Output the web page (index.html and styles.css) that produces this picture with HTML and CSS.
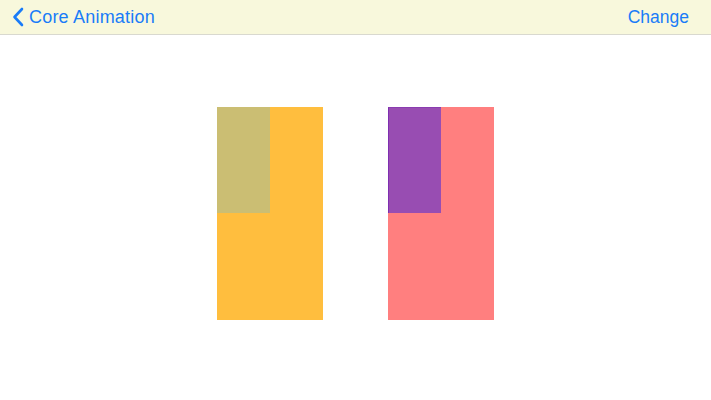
FILE: index.html
```html
<!DOCTYPE html>
<html>
<head>
<meta charset="utf-8">
<link rel="stylesheet" href="styles.css">
</head>
<body>
<header class="nav">
  <a class="back">
    <svg class="chev" width="12" height="20" viewBox="0 0 12 20"><path d="M10 2 L2.5 10 L10 18" fill="none" stroke="#1a7cf8" stroke-width="2.6" stroke-linecap="round" stroke-linejoin="round"/></svg>
    <span class="back-label">Core Animation</span>
  </a>
  <a class="action">Change</a>
</header>
<main class="stage">
  <div class="box orange"><div class="inner olive"></div></div>
  <div class="box pink"><div class="inner purple"></div></div>
</main>
</body>
</html>
```
FILE: styles.css
```css
html, body { margin: 0; padding: 0; background: #fff; }
body { font-family: "Helvetica Neue", "Liberation Sans", Arial, sans-serif; width: 711px; height: 400px; overflow: hidden; }
.nav {
  height: 34px;
  background: #f8f8dc;
  border-bottom: 1px solid #d9d9cf;
  display: flex;
  align-items: center;
  justify-content: space-between;
  padding: 0 22px 0 12px;
  color: #1a7cf8;
  font-size: 17.5px;
}
.back { display: flex; align-items: center; gap: 5px; }
.back-label { font-size: 18px; letter-spacing: 0.2px; }
.chev { display: block; margin-top: 0; }
.stage {
  display: flex;
  justify-content: center;
  gap: 65px;
  padding-top: 72px;
}
.box { width: 106px; height: 213px; }
.inner { width: 53px; height: 106px; box-sizing: border-box; }
.orange { background: #ffbe3e; }
.olive { background: #cbbe73; }
.pink { background: #ff7f7f; }
.purple { background: #984db2; border-left: 1px solid #7f2fb0; border-top: 1px solid #8a3cb0; }
```
